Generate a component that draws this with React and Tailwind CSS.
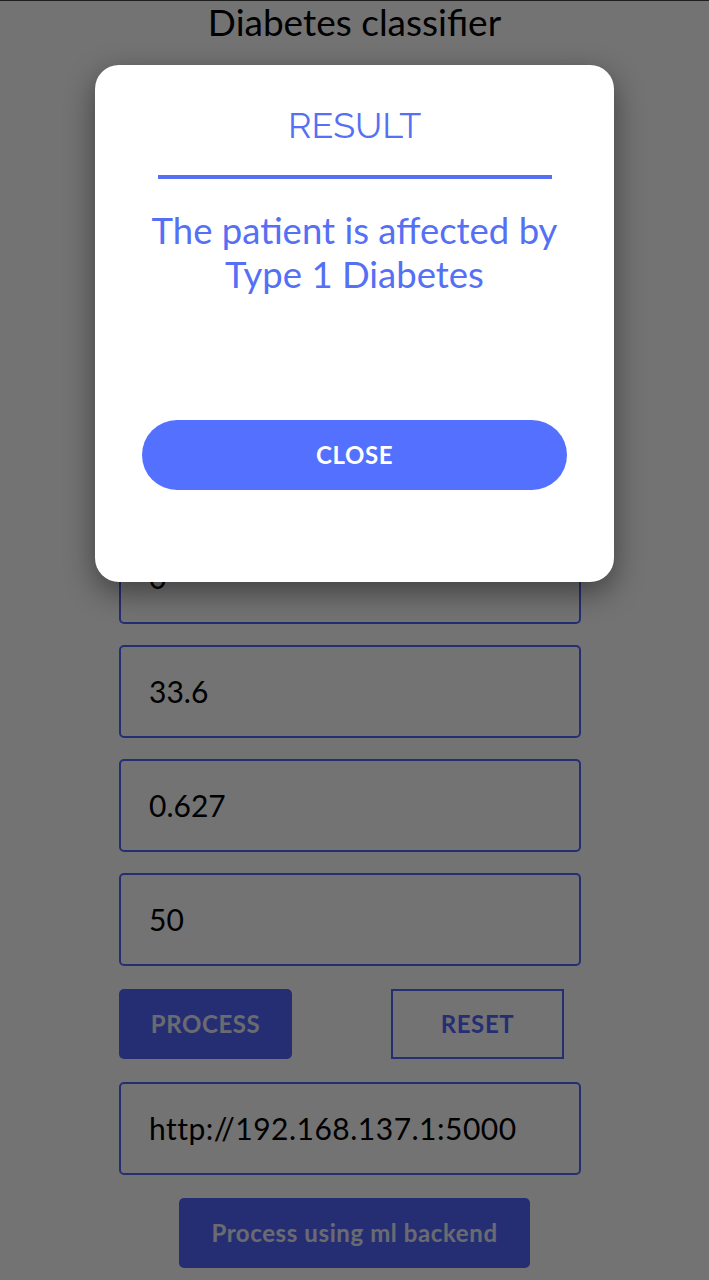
import React from "react";

const values = ["6", "148", "72", "35", "0", "33.6", "0.627", "50"];

function Field({ value, extra = "" }) {
  return (
    <div className={"h-[93px] w-[462px] rounded-[5px] border-2 border-[#5567ff] flex items-center pl-[28px] text-[30px] text-black " + extra}>
      {value}
    </div>
  );
}

export default function App() {
  return (
    <div className="relative w-[709px] h-[1280px] overflow-hidden bg-white" style={{ fontFamily: "Lato, 'Open Sans', sans-serif" }}>
      <div className="h-[1px] bg-[#444]" />
      <div className="text-center text-[37px] leading-[42px] text-black">Diabetes classifier</div>
      <div className="flex flex-col items-start pl-[119px] pt-[32px]">
        <div className="flex flex-col gap-[21px]">
          {values.map((v, i) => (
            <Field key={i} value={v} />
          ))}
        </div>
        <div className="mt-[23px] w-[445px] flex justify-between">
          <div className="w-[173px] h-[70px] rounded-[5px] bg-[#5567ff] flex items-center justify-center text-[24px] font-bold text-[#eceefa] tracking-wide">PROCESS</div>
          <div className="w-[173px] h-[70px] border-2 border-[#5567ff] flex items-center justify-center text-[24px] font-bold text-[#5567ff] tracking-wide">RESET</div>
        </div>
        <div className="mt-[23px]">
          <Field value="http://192.168.137.1:5000" extra="tracking-[0.5px]" />
        </div>
        <div className="mt-[23px] ml-[60px] w-[351px] h-[70px] rounded-[5px] bg-[#5567ff] flex items-center justify-center text-[24px] font-bold text-[#eceefa] tracking-wide">Process using ml backend</div>
      </div>

      <div className="absolute inset-0 bg-black/[0.55]" />

      <div className="absolute left-[95px] top-[65px] w-[519px] h-[517px] rounded-[24px] bg-white shadow-[0_10px_30px_rgba(0,0,0,0.45)] flex flex-col items-center">
        <div className="mt-[40px] text-[36px] leading-[40px] text-[#5570f4]" style={{ fontFamily: "Raleway, Lato, sans-serif" }}>RESULT</div>
        <div className="mt-[30px] w-[394px] h-[4px] bg-[#5570f4]" />
        <div className="mt-[29px] text-center text-[36.5px] leading-[44px] text-[#5570f4]">
          <div>The patient is affected by</div>
          <div>Type 1 Diabetes</div>
        </div>
        <div className="mt-[124px] w-[425px] h-[70px] rounded-full bg-[#5470ff] flex items-center justify-center text-[24px] font-bold text-white tracking-wide">CLOSE</div>
      </div>
    </div>
  );
}
